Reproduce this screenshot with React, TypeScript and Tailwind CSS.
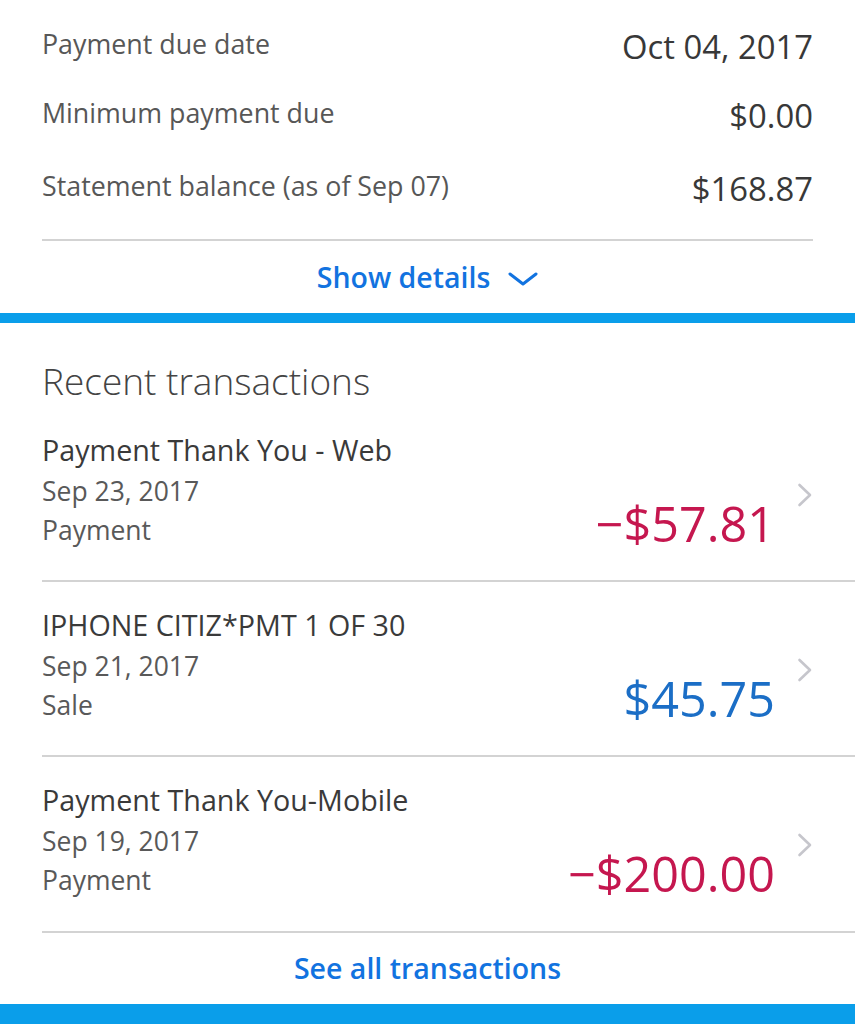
// Card statement summary + recent transactions list

type Txn = {
    title: string;
    date: string;
    kind: string;
    amount: string;
    negative: boolean;
};

const SUMMARY = [
    { label: "Payment due date", value: "Oct 04, 2017", mt: "mt-[31px]" },
    { label: "Minimum payment due", value: "$0.00", mt: "mt-[36px]" },
    { label: "Statement balance (as of Sep 07)", value: "$168.87", mt: "mt-[40px]" },
];

const TXNS: Txn[] = [
    { title: "Payment Thank You - Web", date: "Sep 23, 2017", kind: "Payment", amount: "\u2212$57.81", negative: true },
    { title: "IPHONE CITIZ*PMT 1 OF 30", date: "Sep 21, 2017", kind: "Sale", amount: "$45.75", negative: false },
    { title: "Payment Thank You-Mobile", date: "Sep 19, 2017", kind: "Payment", amount: "\u2212$200.00", negative: true },
];

function Chevron() {
    return (
        <svg width="16" height="24" viewBox="0 0 16 24" className="ml-[22px] mt-[76px] shrink-0">
            <path d="M2.5 2 L13 12 L2.5 22" fill="none" stroke="#c6c6cc" strokeWidth="2.6" strokeLinecap="round" strokeLinejoin="round" />
        </svg>
    );
}

function TxnRow({ t }: { t: Txn }) {
    return (
        <div className="flex items-start pl-[42px] pr-[42px]">
            <div className="flex-1 flex flex-col pt-[29px] pb-[37px]">
                <p className="text-[28.7px] leading-none text-[#3a3a3a]">{t.title}</p>
                <p className="text-[26.5px] leading-none text-[#595959] mt-[13px]">{t.date}</p>
                <p className="text-[26.5px] leading-none text-[#595959] mt-[12.5px]">{t.kind}</p>
            </div>
            <p className={`mt-[92px] text-[48.5px] leading-none ${t.negative ? "text-[#c5174f]" : "text-[#1b6ec6]"}`}>
                {t.amount}
            </p>
            <Chevron />
        </div>
    );
}

export default function App() {
    return (
        <div className="w-[855px] h-[1024px] overflow-hidden bg-white font-['Open_Sans',sans-serif]">
            {/* Statement summary */}
            <section className="px-[42px]">
                {SUMMARY.map(r => (
                    <div key={r.label} className={`flex items-start justify-between ${r.mt}`}>
                        <span className="text-[26.8px] leading-none text-[#575757]">{r.label}</span>
                        <span className="text-[32.8px] leading-none text-[#383838]">{r.value}</span>
                    </div>
                ))}
                <div className="mt-[34px] h-[2px] bg-[#d3d3d3]" />
                <button className="mt-[22px] w-full flex items-center justify-center text-[28.5px] leading-none font-semibold text-[#1273e0]">
                    <span>Show details</span>
                    <svg width="30" height="14" viewBox="0 0 30 14" className="ml-[18px] mt-[2px]">
                        <path d="M2 2 L15 12 L28 2" fill="none" stroke="#1273e0" strokeWidth="3" strokeLinecap="round" strokeLinejoin="round" />
                    </svg>
                </button>
            </section>

            <div className="mt-[21px] h-[10px] bg-[#0a9eea]" />

            {/* Recent transactions */}
            <section>
                <h2 className="mt-[39px] mb-[8px] px-[42px] text-[37px] leading-none font-light text-[#444]">Recent transactions</h2>
                {TXNS.map((t, i) => (
                    <div key={t.title}>
                        {i > 0 && <div className="ml-[42px] h-[2px] bg-[#d3d3d3]" />}
                        <TxnRow t={t} />
                    </div>
                ))}
                <div className="ml-[42px] h-[2px] bg-[#d3d3d3]" />
                <p className="mt-[21px] text-center text-[28.5px] leading-none font-semibold text-[#1273e0]">See all transactions</p>
            </section>

            <div className="mt-[22px] h-[30px] bg-[#0a9eea]" />
        </div>
    );
}
